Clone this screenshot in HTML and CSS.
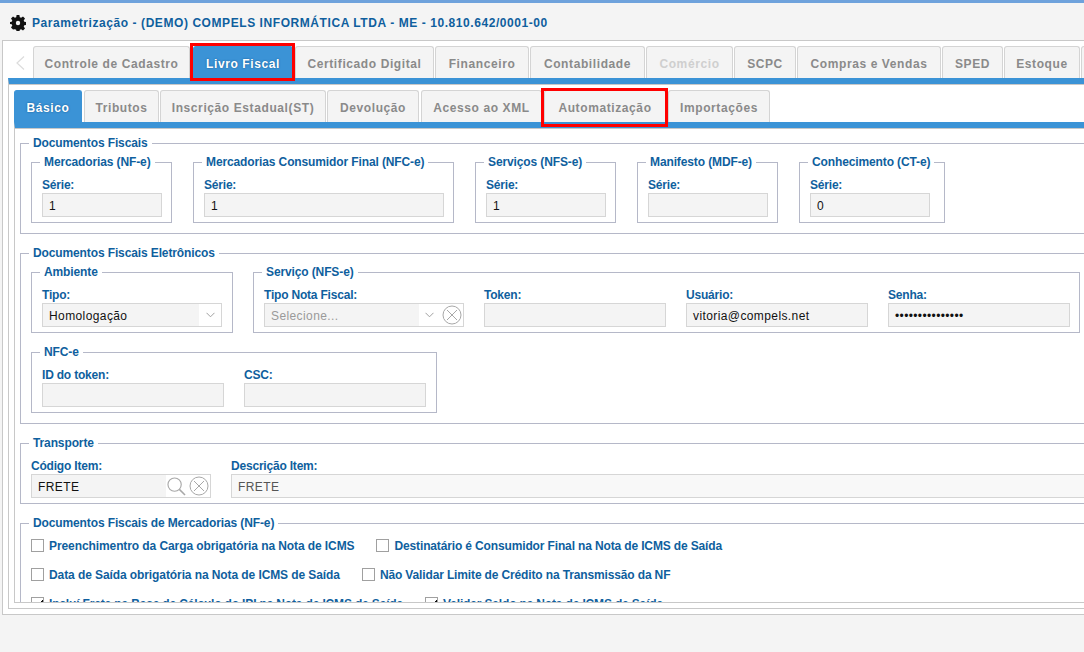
FILE: index.html
```html
<!DOCTYPE html>
<html lang="pt-BR">
<head>
<meta charset="utf-8">
<title>Parametrização</title>
<link rel="stylesheet" href="styles.css">
</head>
<body>
<div class="page">
  <header class="header">
    <svg class="gear" viewBox="0 0 16 16"><path d="M6.600 0h2.800l.4 2.200 1.300.6L13 1.500l2 2-1.300 1.900.6 1.300 2.200.4v2.800l-2.200.4-.6 1.300 1.300 1.900-2 2-1.900-1.300-1.300.6-.4 2.200H6.600l-.4-2.200-1.300-.6L3 14.500l-2-2 1.300-1.900-.6-1.300L-.3 8.900V7.100l2-.4.6-1.300L1 3.500l2-2 1.900 1.300 1.300-.6z" fill="#111"/><circle cx="8" cy="8" r="2.200" fill="#f4f4f4"/></svg>
    <h1 class="title">Parametrização - (DEMO) COMPELS INFORMÁTICA LTDA - ME - 10.810.642/0001-00</h1>
  </header>
  <div class="outer">
    <div class="tabs main-tabs">
      <svg class="prev" viewBox="0 0 10 14"><path d="M9 .5 2 7l7 6.500" fill="none" stroke="#dcdcdc" stroke-width="1.200"/></svg>
      <span class="tab t-controle">Controle de Cadastro</span>
      <span class="tab active t-livro">Livro Fiscal</span>
      <span class="tab t-cert">Certificado Digital</span>
      <span class="tab t-fin">Financeiro</span>
      <span class="tab t-cont">Contabilidade</span>
      <span class="tab disabled t-com">Comércio</span>
      <span class="tab t-scpc">SCPC</span>
      <span class="tab t-cv">Compras e Vendas</span>
      <span class="tab t-sped">SPED</span>
      <span class="tab t-est">Estoque</span>
      <span class="tab t-next"></span>
    </div>
    <div class="inner">
      <div class="tabs sub-tabs">
        <span class="tab active t-bas">Básico</span>
        <span class="tab t-tri">Tributos</span>
        <span class="tab t-ins">Inscrição Estadual(ST)</span>
        <span class="tab t-dev">Devolução</span>
        <span class="tab t-xml">Acesso ao XML</span>
        <span class="tab t-aut">Automatização</span>
        <span class="tab t-imp">Importações</span>
      </div>
      <div class="content">
        <fieldset class="group g-docs">
          <legend>Documentos Fiscais</legend>
          <div class="row gap21">
            <fieldset class="sub w-141"><legend>Mercadorias (NF-e)</legend><label>Série:</label><div class="input w-120">1</div></fieldset>
            <fieldset class="sub w-261"><legend>Mercadorias Consumidor Final (NFC-e)</legend><label>Série:</label><div class="input w-240">1</div></fieldset>
            <fieldset class="sub w-141"><legend>Serviços (NFS-e)</legend><label>Série:</label><div class="input w-120">1</div></fieldset>
            <fieldset class="sub w-141"><legend>Manifesto (MDF-e)</legend><label>Série:</label><div class="input w-120"></div></fieldset>
            <fieldset class="sub w-146"><legend>Conhecimento (CT-e)</legend><label>Série:</label><div class="input w-120">0</div></fieldset>
          </div>
        </fieldset>
        <fieldset class="group g-ele">
          <legend>Documentos Fiscais Eletrônicos</legend>
          <div class="row gap20">
            <fieldset class="sub w-202">
              <legend>Ambiente</legend>
              <label>Tipo:</label>
              <div class="input combo w-180"><span class="combo-text">Homologação</span><span class="btn"><svg class="chev" viewBox="0 0 9 6"><path d="M.5.8 4.500 4.800 8.500.8" fill="none" stroke="#a0a0a0" stroke-width="1"/></svg></span></div>
            </fieldset>
            <fieldset class="sub w-827">
              <legend>Serviço (NFS-e)</legend>
              <div class="row gap20">
                <div>
                  <label>Tipo Nota Fiscal:</label>
                  <div class="input combo w-200"><span class="combo-text muted">Selecione...</span><span class="btn btn-two"><svg class="chev" viewBox="0 0 9 6"><path d="M.5.8 4.500 4.800 8.500.8" fill="none" stroke="#a0a0a0" stroke-width="1"/></svg><svg class="clear" viewBox="0 0 20 20"><circle cx="10" cy="10" r="9" fill="none" stroke="#a8a8a8" stroke-width="1"/><path d="m5 5 10 10M15 5 5 15" stroke="#a8a8a8" stroke-width="1"/></svg></span></div>
                </div>
                <div><label>Token:</label><div class="input w-182"></div></div>
                <div><label>Usuário:</label><div class="input w-182">vitoria@compels.net</div></div>
                <div><label>Senha:</label><div class="input w-182 pass">•••••••••••••••</div></div>
              </div>
            </fieldset>
          </div>
          <fieldset class="sub w-406 nfce">
            <legend>NFC-e</legend>
            <div class="row gap20">
              <div><label>ID do token:</label><div class="input w-182"></div></div>
              <div><label>CSC:</label><div class="input w-182"></div></div>
            </div>
          </fieldset>
        </fieldset>
        <fieldset class="group g-trans">
          <legend>Transporte</legend>
          <div class="row gap20">
            <div><label>Código Item:</label><div class="input combo w-180"><span class="combo-text">FRETE</span><span class="btn btn-search"><svg class="lens" viewBox="0 0 20 20"><circle cx="8" cy="8" r="7" fill="none" stroke="#a8a8a8" stroke-width="1.200"/><path d="m13 13 6 6" stroke="#a8a8a8" stroke-width="1.600"/></svg><svg class="clear" viewBox="0 0 20 20"><circle cx="10" cy="10" r="9" fill="none" stroke="#a8a8a8" stroke-width="1"/><path d="m5 5 10 10M15 5 5 15" stroke="#a8a8a8" stroke-width="1"/></svg></span></div></div>
            <div><label>Descrição Item:</label><div class="input w-880 readonly">FRETE</div></div>
          </div>
        </fieldset>
        <fieldset class="group g-nfe">
          <legend>Documentos Fiscais de Mercadorias (NF-e)</legend>
          <div class="checks">
            <div class="check-row">
              <span class="check"><i class="box"></i>Preenchimentro da Carga obrigatória na Nota de ICMS</span>
              <span class="check"><i class="box"></i>Destinatário é Consumidor Final na Nota de ICMS de Saída</span>
            </div>
            <div class="check-row">
              <span class="check"><i class="box"></i>Data de Saída obrigatória na Nota de ICMS de Saída</span>
              <span class="check"><i class="box"></i>Não Validar Limite de Crédito na Transmissão da NF</span>
            </div>
            <div class="check-row clipped">
              <span class="check"><i class="box on"></i>Incluí Frete na Base de Cálculo do IPI na Nota de ICMS de Saída</span>
              <span class="check"><i class="box on"></i>Validar Saldo na Nota de ICMS de Saída</span>
            </div>
          </div>
        </fieldset>
      </div>
    </div>
  </div>
  <div class="mark mark-livro"></div>
  <div class="mark mark-auto"></div>
</div>
</body>
</html>
```
FILE: styles.css
```css
* { box-sizing: border-box; }
html, body { margin: 0; height: 100%; overflow: hidden; }
body { background: #f4f4f4; font-family: "Liberation Sans", Arial, sans-serif; font-size: 12px; }
.page { position: relative; width: 1084px; height: 652px; overflow: hidden; border-top: 3px solid #6ea2dc; }

.header { display: flex; align-items: center; height: 37px; padding: 2px 0 0 10px; gap: 6px; }
.gear { width: 16px; height: 16px; flex: none; }
.title { margin: 0; font-size: 12px; font-weight: bold; color: #0f5f9e; letter-spacing: 0.57px; white-space: nowrap; }

.outer { width: 1140px; height: 575px; margin-left: 2px; background: #fff; border: 1px solid #c8c8c8; padding: 5px 0 0 5px; }
.tabs { display: flex; align-items: flex-end; gap: 1px; }
.main-tabs { height: 32px; padding-left: 4px; }
.prev { width: 10px; height: 14px; align-self: center; margin: 2px 7px 0 3px; flex: none; }
.tab { display: flex; align-items: center; justify-content: center; height: 32px; padding-top: 2px; flex: none; background: #f4f4f4; border: 1px solid #d4d4d4; border-bottom: 0; border-radius: 3px 3px 0 0; color: #8a8a8a; font-weight: bold; font-size: 12px; letter-spacing: 0.6px; white-space: nowrap; }
.tab.active { background: #3b93d6; border-color: #3b93d6; color: #fff; text-shadow: 0 0 2px #14568f; }
.tab.disabled { color: #cfcfcf; }

.t-controle { width: 157px; }
.t-livro { width: 100px; margin-left: 2px; }
.t-cert { width: 139px; margin-left: 1px; }
.t-fin { width: 94px; }
.t-cont { width: 115px; }
.t-com { width: 87px; }
.t-scpc { width: 62px; }
.t-cv { width: 144px; }
.t-sped { width: 61px; }
.t-est { width: 76px; }
.t-next { width: 60px; }

.inner { width: 1130px; height: 531px; background: #fff; border: 1px solid #c8c8c8; border-top: 6px solid #3b93d6; padding: 6px 0 0 5px; box-shadow: inset 0 1px 0 #c8c8c8; }
.sub-tabs { height: 32px; }
.t-bas { width: 68px; }
.t-tri { width: 75px; margin-left: 1px; }
.t-ins { width: 166px; }
.t-dev { width: 92px; }
.t-xml { width: 121px; margin-left: 1px; }
.t-aut { width: 122px; margin-left: 1px; }
.t-imp { width: 102px; margin-left: 1px; }

.content { width: 1110px; height: 481px; overflow: hidden; border-top: 6px solid #3b93d6; border-left: 1px solid #c8c8c8; border-bottom: 1px solid #c8c8c8; padding: 8px 0 0 5px; background: #fff; box-shadow: inset 0 1px 0 #c8c8c8; }

fieldset { margin: 0; min-width: 0; border: 1px solid #b5b8c8; }
legend { padding: 0 4px; margin-left: -2px; font-weight: bold; font-size: 12px; line-height: 14px; letter-spacing: -0.12px; color: #0f5f9e; white-space: nowrap; }
.group { width: 1100px; padding: 5px 10px 0; margin-bottom: 12px; }
.g-docs { height: 98px; }
.g-ele { height: 178px; }
.g-trans { height: 68px; padding-top: 8px; }
.g-nfe { height: 100px; padding-top: 1px; margin-bottom: 0; }
.sub { padding: 8px 10px 0; height: 68px; flex: none; }
.nfce { margin-top: 12px; }
.row { display: flex; }
.gap20 { gap: 20px; }
.gap21 { gap: 21px; }

.w-141 { width: 141px; }
.w-146 { width: 146px; }
.w-202 { width: 202px; }
.w-261 { width: 261px; }
.w-406 { width: 406px; }
.w-827 { width: 827px; }
.w-120 { width: 120px; }
.w-180 { width: 180px; }
.w-182 { width: 182px; }
.w-200 { width: 200px; }
.w-240 { width: 240px; }
.w-880 { width: 880px; }

label { display: block; height: 15px; margin-bottom: 1px; font-weight: bold; line-height: 16px; letter-spacing: -0.2px; color: #0f5f9e; }
.input { height: 24px; background: #f4f4f4; border: 1px solid #d6d6d6; padding: 0 6px; font-size: 12px; line-height: 25px; color: #111; letter-spacing: 0.4px; white-space: nowrap; }
.readonly { background: #f8f8f8; color: #555; }
.pass { letter-spacing: 0.37px; }
.combo { display: flex; padding: 0; }
.combo-text { flex: 1; padding: 0 6px; min-width: 0; }
.muted { color: #9a9a9a; }
.btn { display: flex; align-items: center; justify-content: center; width: 22px; height: 22px; flex: none; background: #fff; }
.btn-two { width: 44px; justify-content: flex-start; padding-left: 6px; gap: 8px; }
.btn-search { width: 44px; justify-content: flex-start; padding-left: 1px; gap: 3px; }
.chev { width: 9px; height: 6px; }
.clear { width: 20px; height: 20px; flex: none; }
.lens { width: 19px; height: 19px; flex: none; }

.checks { height: 87px; }
.check-row { display: flex; height: 29px; align-items: center; gap: 22px; }
.check { display: flex; align-items: center; font-weight: bold; color: #0f5f9e; white-space: nowrap; letter-spacing: -0.09px; }
.check + .check { letter-spacing: -0.14px; }
.clipped .check { letter-spacing: -0.16px; }
.box { width: 13px; height: 13px; flex: none; margin-right: 5px; background: #fff; border: 1px solid #a0a0a0; }
.box.on { background: linear-gradient(135deg, #fff 55%, #111 55%); }

.mark { position: absolute; border: 3px solid #f00; pointer-events: none; }
.mark-livro { left: 190px; top: 40px; width: 105px; height: 38px; }
.mark-auto { left: 541px; top: 85px; width: 127px; height: 39px; }
```
